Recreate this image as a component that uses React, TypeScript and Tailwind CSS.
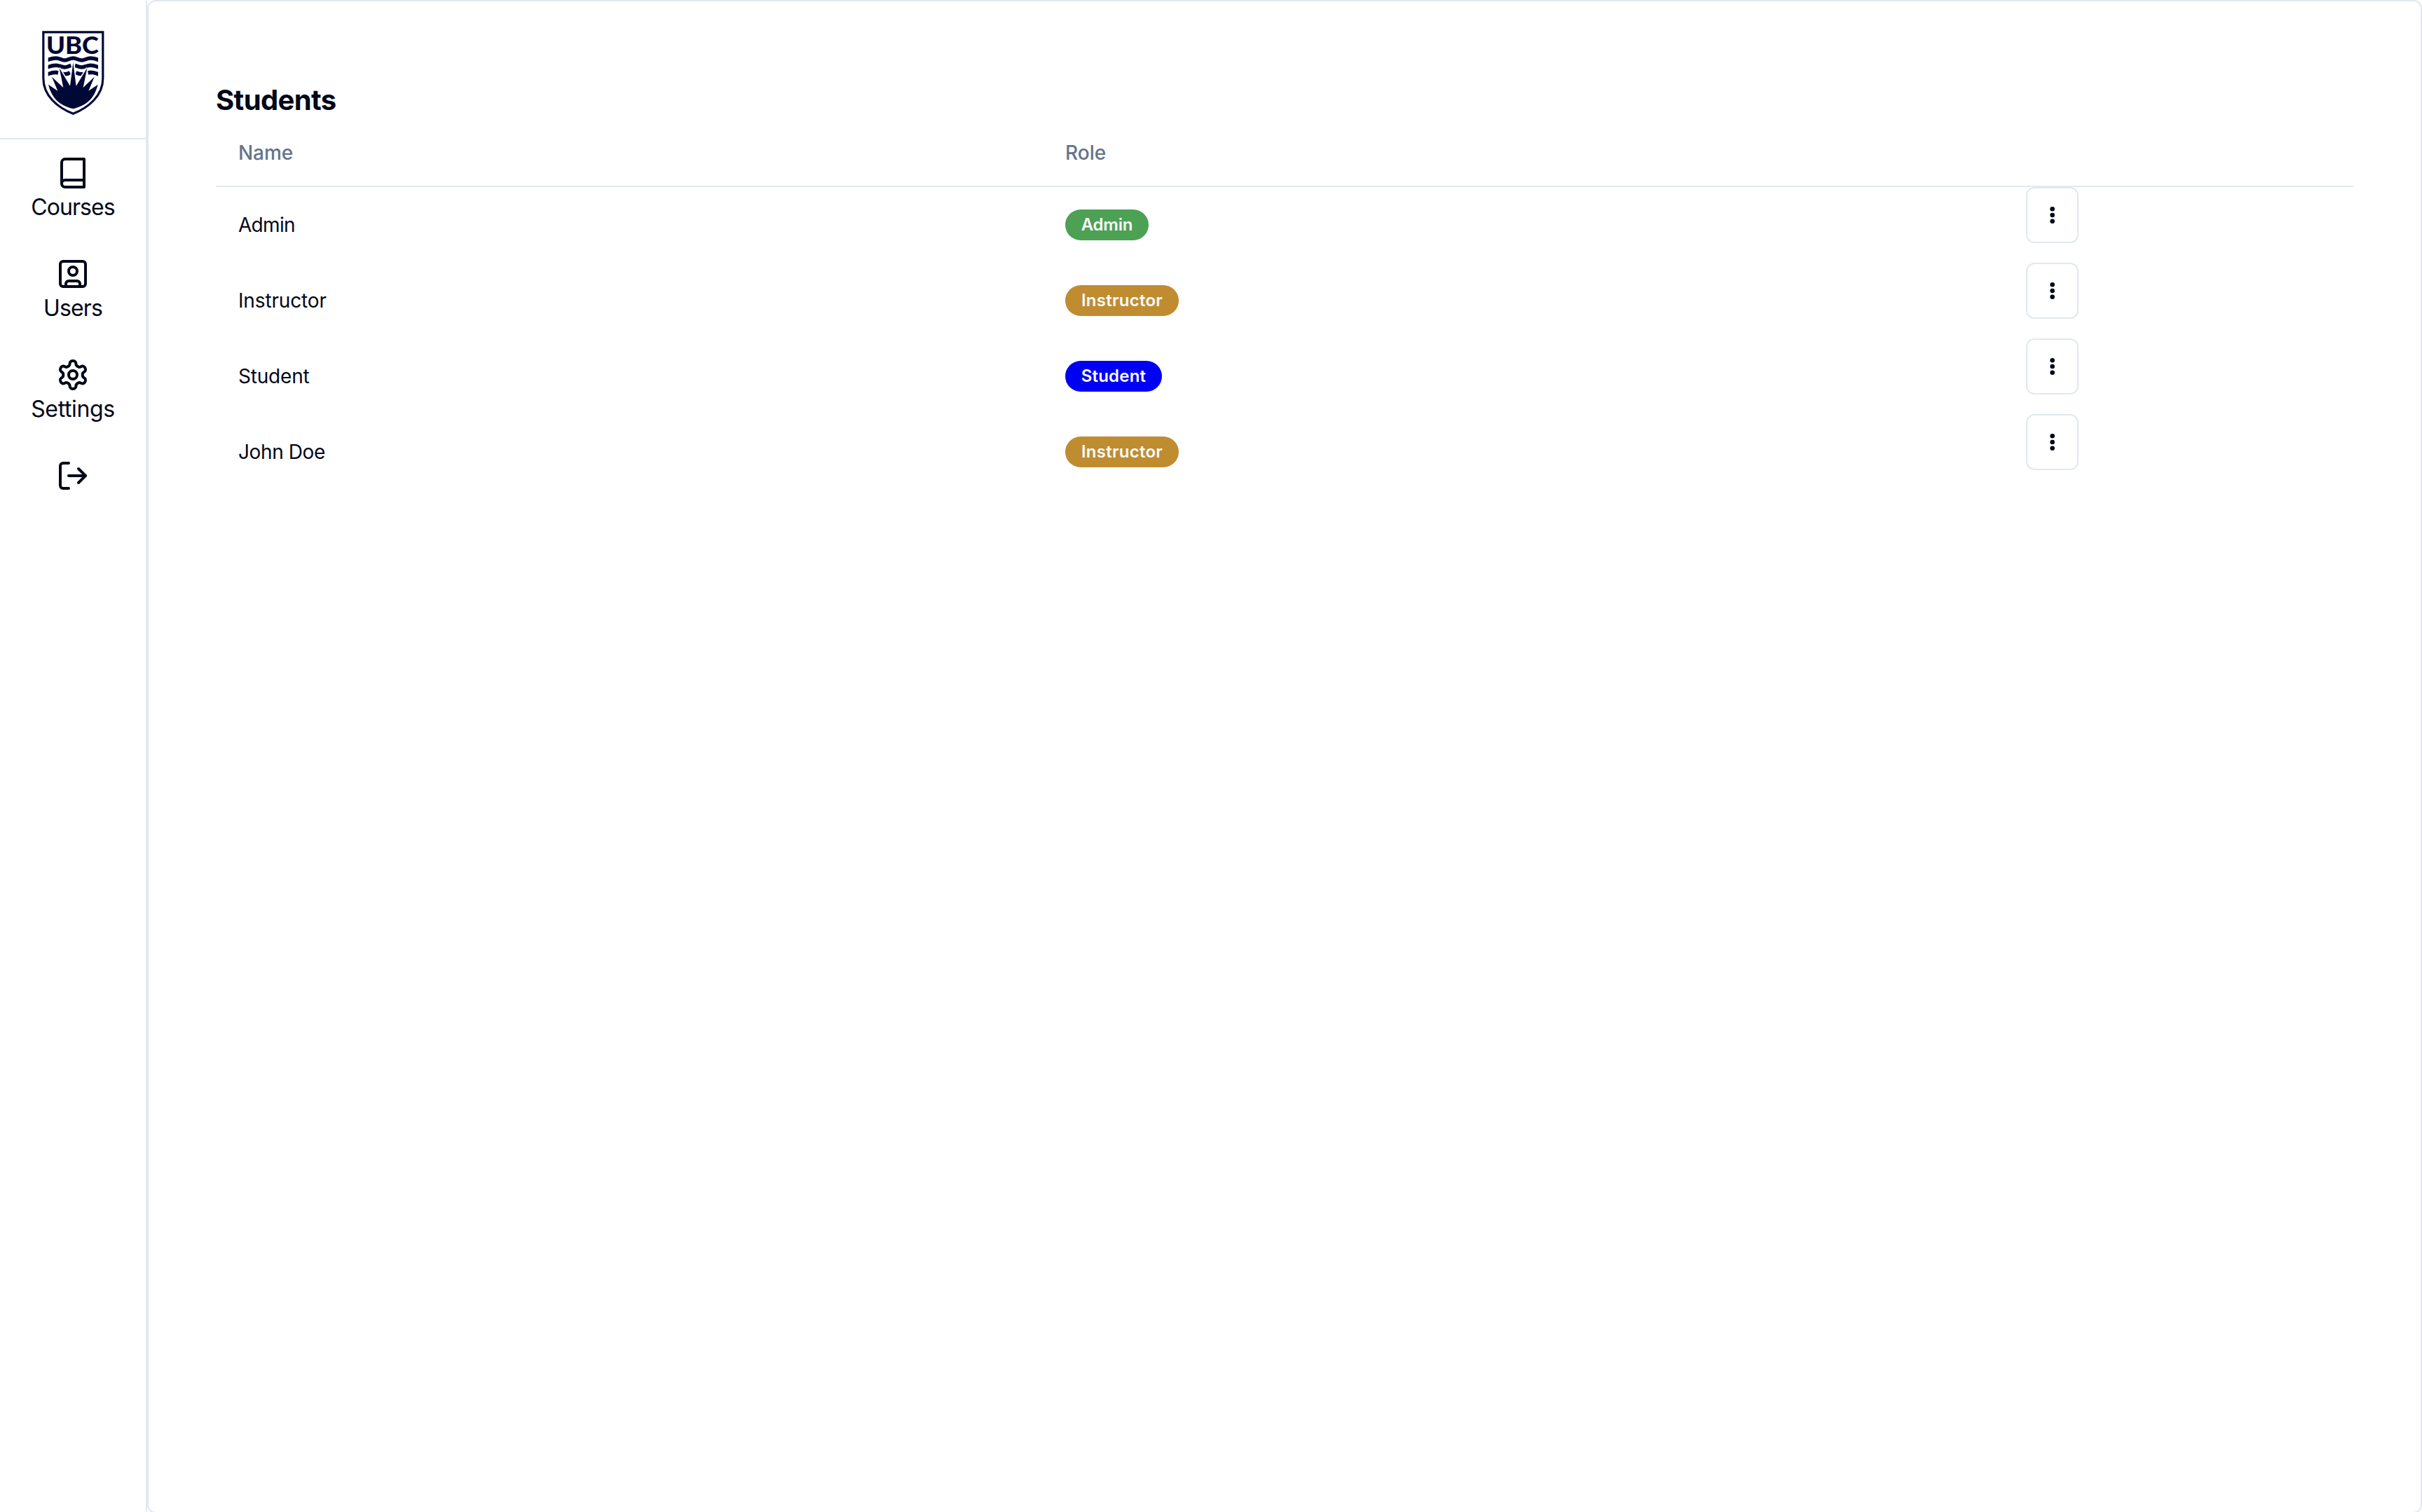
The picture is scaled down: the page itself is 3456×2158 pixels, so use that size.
import type { ReactNode } from "react";

function Crest() {
  return (
    <svg width="90" height="122" viewBox="177 129 270 366" fill="none" className="shrink-0">
      <defs>
        <clipPath id="water">
          <rect x="206" y="235" width="214" height="100" />
        </clipPath>
      </defs>
      <path
        d="M185.5 137.5H440.5V335C440.5 410 380 460 313 487C246 460 185.5 410 185.5 335Z"
        fill="#fff"
        stroke="#000836"
        strokeWidth="9.5"
      />
      <text
        x="198"
        y="230"
        fontFamily="Lato, sans-serif"
        fontWeight="900"
        fontSize="101"
        textLength="225"
        lengthAdjust="spacingAndGlyphs"
        fill="#000836"
      >
        UBC
      </text>
      <g stroke="#000836" strokeWidth="16.5" clipPath="url(#water)">
        <path d="M200 258C213 253 226 249 240 249C256 249 262 258 277 258C292 258 297 249 313 249C329 249 334 258 350 258C365 258 371 249 387 249C400 249 413 253 426 258" />
        <path d="M200 289C213 284 226 280 240 280C256 280 262 288 277 288C288 288 294 283 304 280M321 280C332 283 338 288 350 288C365 288 371 280 387 280C400 280 413 284 426 289" />
        <path d="M200 319C213 314 226 310 240 310L249 312M268 316C280 319 292 316 300 311M325 311C334 316 345 319 358 316M377 312L386 310C400 310 413 314 426 319" />
      </g>
      <path
        d="M313 268L326 368L373 291L356 375L404 329L379 389L419 362C401 432 362 452 313 466C264 452 225 432 207 362L247 389L222 329L271 375L254 291L300 368Z"
        fill="#000836"
        stroke="#fff"
        strokeWidth="10"
        strokeLinejoin="miter"
        paintOrder="stroke"
      />
    </svg>
  );
}

function Icon({ children }: { children: ReactNode }) {
  return (
    <svg
      viewBox="0 0 24 24"
      fill="none"
      stroke="currentColor"
      strokeWidth="2"
      strokeLinecap="round"
      strokeLinejoin="round"
      className="size-12 shrink-0"
    >
      {children}
    </svg>
  );
}

const navItems = [
  {
    label: "Courses",
    tracking: "tracking-[-0.95px]",
    icon: <path d="M4 19.5v-15A2.5 2.5 0 0 1 6.5 2H20v20H6.5a2.5 2.5 0 0 1 0-5H20" />,
  },
  {
    label: "Users",
    tracking: "tracking-[-0.9px]",
    icon: (
      <>
        <rect width="18" height="18" x="3" y="3" rx="2" />
        <circle cx="12" cy="10" r="3" />
        <path d="M7 21v-2a2 2 0 0 1 2-2h6a2 2 0 0 1 2 2v2" />
      </>
    ),
  },
  {
    label: "Settings",
    tracking: "tracking-[-0.35px]",
    icon: (
      <>
        <path d="M12.22 2h-.44a2 2 0 0 0-2 2v.18a2 2 0 0 1-1 1.73l-.43.25a2 2 0 0 1-2 0l-.15-.08a2 2 0 0 0-2.73.73l-.22.38a2 2 0 0 0 .73 2.73l.15.1a2 2 0 0 1 1 1.72v.51a2 2 0 0 1-1 1.74l-.15.09a2 2 0 0 0-.73 2.73l.22.38a2 2 0 0 0 2.73.73l.15-.08a2 2 0 0 1 2 0l.43.25a2 2 0 0 1 1 1.73V20a2 2 0 0 0 2 2h.44a2 2 0 0 0 2-2v-.18a2 2 0 0 1 1-1.73l.43-.25a2 2 0 0 1 2 0l.15.08a2 2 0 0 0 2.73-.73l.22-.39a2 2 0 0 0-.73-2.73l-.15-.08a2 2 0 0 1-1-1.74v-.5a2 2 0 0 1 1-1.74l.15-.09a2 2 0 0 0 .73-2.73l-.22-.38a2 2 0 0 0-2.73-.73l-.15.08a2 2 0 0 1-2 0l-.43-.25a2 2 0 0 1-1-1.73V4a2 2 0 0 0-2-2z" />
        <circle cx="12" cy="12" r="3" />
      </>
    ),
  },
];

const roles = {
  Admin: "w-[119px] bg-[#4ca154] tracking-[-0.2px]",
  Instructor: "w-[162px] bg-[#c08c30] tracking-[0.25px]",
  Student: "w-[138px] bg-[#0000f5] tracking-[0.2px]",
};

const users: { name: string; role: keyof typeof roles; tracking: string }[] = [
  { name: "Admin", role: "Admin", tracking: "tracking-[-0.7px]" },
  { name: "Instructor", role: "Instructor", tracking: "tracking-[-0.15px]" },
  { name: "Student", role: "Student", tracking: "tracking-[-0.2px]" },
  { name: "John Doe", role: "Instructor", tracking: "tracking-[-0.4px]" },
];

function Sidebar() {
  return (
    <aside className="flex w-[210px] shrink-0 flex-col border-r-2 border-[#e2e8f0]">
      <div className="flex h-[199px] justify-center border-b-2 border-[#e2e8f0] pt-[43px]">
        <Crest />
      </div>
      <nav className="flex flex-col">
        {navItems.map((item) => (
          <a key={item.label} className="flex h-36 flex-col items-center py-6">
            <Icon>{item.icon}</Icon>
            <span className={`text-[32px] leading-[49px] ${item.tracking}`}>{item.label}</span>
          </a>
        ))}
        <button className="flex flex-col items-center py-6" aria-label="Log out">
          <Icon>
            <path d="M9 21H5a2 2 0 0 1-2-2V5a2 2 0 0 1 2-2h4" />
            <path d="m16 17 5-5-5-5" />
            <path d="M21 12H9" />
          </Icon>
        </button>
      </nav>
    </aside>
  );
}

export default function App() {
  return (
    <div className="flex h-[2158px] w-full overflow-hidden bg-white font-['Inter',sans-serif] text-[#020817]">
      <Sidebar />
      <main className="h-[2160px] grow rounded-xl border-2 border-[#e2e8f0] px-24 pt-[113px]">
        <h1 className="text-[40px] leading-[56px] font-bold tracking-[-0.6px]">Students</h1>
        <div className="grid h-24 grid-cols-[1180px_1403px_1fr] items-center border-b-2 border-[#e2e8f0] text-[28px] font-medium text-[#64748b]">
          <span className="pl-8 tracking-[-0.1px]">Name</span>
          <span className="pl-8">Role</span>
        </div>
        {users.map((user) => (
          <div key={user.name} className="grid h-[108px] grid-cols-[1180px_1403px_1fr] items-center">
            <span className={`pl-8 text-[28px] ${user.tracking}`}>{user.name}</span>
            <div className="pl-8">
              <span
                className={`flex h-11 items-center justify-center rounded-full text-[24px] font-semibold text-[#f8fafc] ${roles[user.role]}`}
              >
                {user.role}
              </span>
            </div>
            <button
              aria-label="Open menu"
              className="flex h-20 w-[75px] items-center justify-center self-start rounded-xl border-2 border-[#e2e8f0]"
            >
              <svg width="8" height="26" viewBox="0 0 8 26" fill="currentColor">
                <circle cx="3.6" cy="4.3" r="3.3" />
                <circle cx="3.6" cy="13" r="3.3" />
                <circle cx="3.6" cy="21.7" r="3.3" />
              </svg>
            </button>
          </div>
        ))}
      </main>
    </div>
  );
}
